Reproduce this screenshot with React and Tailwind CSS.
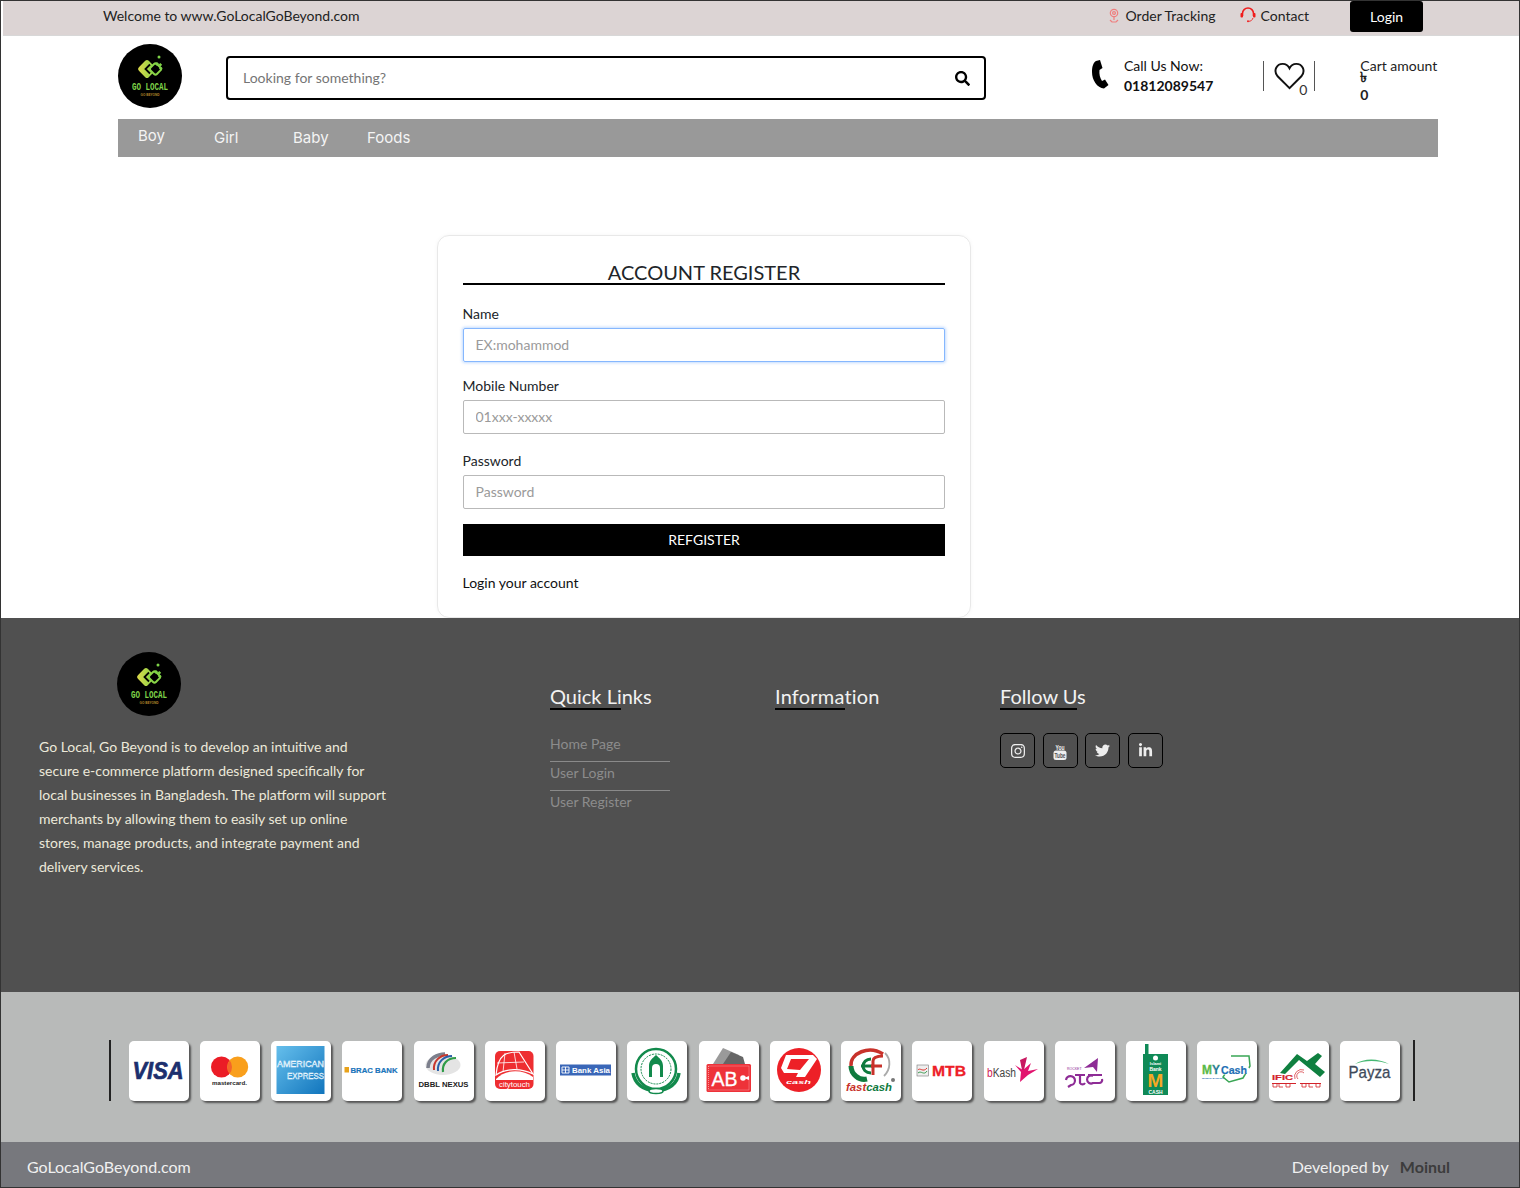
import React from "react";
import { FaInstagram, FaTwitter, FaLinkedinIn, FaSearch } from "react-icons/fa";

const LATO = { fontFamily: "Lato, sans-serif" };
const sans = "Liberation Sans, Arial, sans-serif";

function Logo() {
  return (
    <svg width="64" height="64" viewBox="0 0 64 64" className="block shrink-0">
      <defs>
        <linearGradient id="lg" x1="0" y1="1" x2="1" y2="0">
          <stop offset="0" stopColor="#e0d84a" />
          <stop offset="1" stopColor="#7ed348" />
        </linearGradient>
      </defs>
      <circle cx="32" cy="32" r="32" fill="#000" />
      <rect x="22" y="18" width="14" height="14" rx="2.500" transform="rotate(45 29 25)" fill="url(#lg)" />
      <rect x="33" y="20.500" width="9" height="9" rx="2" transform="rotate(45 37.500 25)" fill="#000" stroke="#8ad648" strokeWidth="2" />
      <path d="M32 20.500 L27.500 25 L32 29.500" fill="none" stroke="#000" strokeWidth="1.800" />
      <rect x="37.500" y="18.500" width="3" height="3" fill="#7ed348" transform="rotate(45 39 20)" />
      <rect x="41" y="19.500" width="2.600" height="2.600" fill="#7ed348" transform="rotate(45 42.300 20.800)" />
      <rect x="41.500" y="23" width="2.600" height="2.600" fill="#7ed348" transform="rotate(45 42.800 24.300)" />
      <circle cx="41" cy="13" r="1.500" fill="#7ed348" />
      <text x="32" y="46" textAnchor="middle" fontFamily="Liberation Mono, monospace" fontWeight="700" fontSize="10" textLength="36" lengthAdjust="spacingAndGlyphs" fill="#7ed348">GO LOCAL</text>
      <text x="32" y="51.500" textAnchor="middle" fontFamily={sans} fontWeight="700" fontSize="3" textLength="19" lengthAdjust="spacingAndGlyphs" fill="#b98a2a">GO BEYOND</text>
    </svg>
  );
}

const T = ({ children, ...p }) => (
  <text fontFamily={sans} fontWeight="700" {...p}>{children}</text>
);

const pay = [
  <T x="3.500" y="38" fontSize="24" fontStyle="italic" fill="#1c2f6e" stroke="#1c2f6e" strokeWidth="0.700" textLength="51" lengthAdjust="spacingAndGlyphs">VISA</T>,
  <g>
    <circle cx="21.500" cy="26" r="10.500" fill="#eb1c26" />
    <circle cx="37.700" cy="26" r="10.500" fill="#f99f1c" />
    <path d="M29.600 19.300 a10.500 10.500 0 0 1 0 13.400 a10.500 10.500 0 0 1 0 -13.400z" fill="#f4652a" />
    <T x="12" y="43.500" fontSize="5.500" fill="#222" textLength="35" lengthAdjust="spacingAndGlyphs">mastercard.</T>
  </g>,
  <g>
    <defs>
      <linearGradient id="ax" x1="0" y1="0" x2="1" y2="1">
        <stop offset="0" stopColor="#66bfec" />
        <stop offset="1" stopColor="#1175bd" />
      </linearGradient>
    </defs>
    <rect x="5.500" y="5" width="48" height="48" fill="url(#ax)" />
    <text x="6" y="26" fontFamily={sans} fontSize="9.500" fill="#8fcdf0" stroke="#fff" strokeWidth="0.400" textLength="47" lengthAdjust="spacingAndGlyphs">AMERICAN</text>
    <text x="16" y="38" fontFamily={sans} fontSize="9.500" fill="#8fcdf0" stroke="#fff" strokeWidth="0.400" textLength="37" lengthAdjust="spacingAndGlyphs">EXPRESS</text>
  </g>,
  <g>
    <rect x="2.500" y="26" width="4.500" height="5.500" fill="#e8a21a" />
    <T x="8.500" y="31.500" fontSize="8" fill="#1b75bb" stroke="#1b75bb" strokeWidth="0.200" textLength="47" lengthAdjust="spacingAndGlyphs">BRAC BANK</T>
  </g>,
  <g>
    <ellipse cx="29" cy="24" rx="17.500" ry="10" fill="#e4e4e4" />
    <path d="M14 27 C14 17 24 13 31 13" stroke="#7c7f8c" strokeWidth="3.500" fill="none" />
    <path d="M20 29 C19 20 26 14 34 14" stroke="#c8372d" strokeWidth="2" fill="none" />
    <path d="M24 30 C23 21 30 15 38 15" stroke="#2a5fa8" strokeWidth="2" fill="none" />
    <path d="M29 31 C28 23 33 17 42 17" stroke="#2f9c48" strokeWidth="2.200" fill="none" />
    <T x="4.500" y="45.500" fontSize="8" fill="#222" textLength="50" lengthAdjust="spacingAndGlyphs">DBBL NEXUS</T>
  </g>,
  <g>
    <rect x="10" y="10" width="38.500" height="38" rx="5" fill="#ee2e31" />
    <path d="M11 34 C13 12 22 11 34 11 L48 33 C38 28 22 26 11 34Z" fill="#ee2e31" stroke="#fff" strokeWidth="1.200" />
    <path d="M20 12 L18 31 M12 22 L39 21 M29 11 L32 28" stroke="#fff" strokeWidth="0.800" />
    <path d="M11 38 C20 28 38 28 48 36 L48 39 L11 39Z" fill="#fff" />
    <text x="14" y="46" fontFamily={sans} fontSize="8" fill="#fff" textLength="31" lengthAdjust="spacingAndGlyphs">citytouch</text>
  </g>,
  <g>
    <rect x="4" y="23.500" width="51" height="11" fill="#3a67b8" />
    <path d="M6 26 h7 v6 h-7z M9.500 26 v6 M6 29 h7" stroke="#fff" strokeWidth="0.900" fill="none" />
    <T x="16" y="32" fontSize="8" fill="#fff" textLength="38" lengthAdjust="spacingAndGlyphs">Bank Asia</T>
  </g>,
  <g fill="none" stroke="#128a4c">
    <circle cx="29" cy="28" r="20" strokeWidth="2.500" />
    <circle cx="29" cy="28" r="15" strokeWidth="1" strokeDasharray="2 1" />
    <path d="M22 36 V25 C22 19 26 17 29 14 C32 17 36 19 36 25 V36 Z" fill="#128a4c" stroke="none" />
    <path d="M25 36 V27 a4 4 0 0 1 8 0 V36Z" fill="#fff" stroke="none" />
    <path d="M6 32 C8 44 18 49 29 50 C40 49 50 44 52 32" strokeWidth="3.500" />
    <ellipse cx="29" cy="50" rx="7" ry="2.500" fill="#fff" strokeWidth="1.500" />
  </g>,
  <g>
    <path d="M14 23 L24 7 L40 14 L42 23Z" fill="#9a9a9a" />
    <path d="M24 23 L32 11 L44 16 L46 23Z" fill="#666" />
    <rect x="7.500" y="23" width="44.500" height="28" rx="1.500" fill="#ee3239" />
    <rect x="9.500" y="25" width="40.500" height="24" fill="none" stroke="#fff" strokeWidth="0.500" strokeDasharray="1 1" />
    <text x="12.500" y="45" fontFamily={sans} fontSize="20" fill="#fff" stroke="#fff" strokeWidth="0.300" textLength="26" lengthAdjust="spacingAndGlyphs">AB</text>
    <circle cx="44" cy="37" r="2.800" fill="#fff" />
    <path d="M45 37 l5 -2 v4z" fill="#fff" />
  </g>,
  <g>
    <circle cx="29" cy="29" r="22" fill="#ed2027" />
    <path d="M16 14 L43 14 L47 18 L35 36 L26 36 L28 32 L14 32 L11 27 Z" fill="#fff" />
    <path d="M21 18 L39 18 L30 29 L17 28 Z" fill="#ed2027" />
    <T x="16" y="43" fontSize="5.500" fontStyle="italic" fill="#fff" textLength="25" lengthAdjust="spacingAndGlyphs">cash</T>
  </g>,
  <g fill="none">
    <path d="M42 13 C28 4 9 12 10 25" stroke="#c8322b" strokeWidth="3.500" />
    <path d="M10 25 C10 33 18 40 26 38" stroke="#0f7a3e" strokeWidth="5" />
    <path d="M44 12 C50 18 50 28 43 35" stroke="#aaa" strokeWidth="1.800" />
    <path d="M30 18 C20 18 19 32 30 32 M20 25 H31" stroke="#0f7a3e" strokeWidth="3" />
    <path d="M32 34 V20 C32 16 36 15 42 15 M30 25 H41" stroke="#c8322b" strokeWidth="3" />
    <text x="5" y="50" fontFamily={sans} fontWeight="700" fontStyle="italic" fontSize="11" textLength="46" lengthAdjust="spacingAndGlyphs" fill="#c8322b">fast<tspan fill="#0f7a3e">cash</tspan></text>
    <circle cx="52" cy="39" r="2" fill="#777" />
  </g>,
  <g>
    <rect x="5" y="24" width="11.500" height="11" fill="#eee" stroke="#777" strokeWidth="0.600" />
    <path d="M6 29 C8 26 11 32 15 27" stroke="#e0322c" strokeWidth="1" fill="none" />
    <path d="M6 32 C9 29 12 35 15 30" stroke="#3c9a50" strokeWidth="1" fill="none" />
    <T x="20" y="35" fontSize="15" fill="#ed2027" stroke="#ed2027" strokeWidth="0.300" textLength="34" lengthAdjust="spacingAndGlyphs">MTB</T>
  </g>,
  <g>
    <text x="3" y="36" fontFamily={sans} fontSize="12.500" fill="#444" textLength="29" lengthAdjust="spacingAndGlyphs"><tspan fill="#d12053">b</tspan>Kash</text>
    <path d="M31 24 L39 29 L47 22 L44 30 L54 28 L44 34 L36 41 L37 31Z" fill="#e2136e" />
    <path d="M36 19 L43 16 L40 29 L38 29Z" fill="#c81860" />
  </g>,
  <g>
    <path d="M29 27 L43 17 L42 31 L38 26Z" fill="#8e2c96" />
    <text x="12" y="29" fontFamily={sans} fontSize="3.500" fill="#8e2c96">ROCKET</text>
    <g fill="none" stroke="#8e2c96" strokeWidth="2.200">
      <path d="M11 39 a4.500 4.500 0 1 1 5 5 l-3 2" />
      <path d="M20 34 h10 M25 34 v8 a3 3 0 0 0 5 0" />
      <path d="M33 34 h14 M38 35 a4 4 0 1 0 0 7 h6 a3 3 0 0 0 3 -4" />
    </g>
  </g>,
  <g>
    <rect x="19" y="3" width="3.500" height="11" fill="#0f8a57" />
    <rect x="17" y="13" width="25" height="41" fill="#0f8a57" />
    <circle cx="29.500" cy="17" r="2.500" fill="#fff" />
    <T x="29.500" y="24" fontSize="4" fill="#fff" textAnchor="middle">Islami</T>
    <T x="29.500" y="29.500" fontSize="5" fill="#fff" textAnchor="middle">Bank</T>
    <T x="29.500" y="46" fontSize="19" fill="#f7a823" textAnchor="middle">M</T>
    <T x="29.500" y="52.500" fontSize="5" fill="#fff" textAnchor="middle">CASH</T>
  </g>,
  <g>
    <path d="M34 15 L52 15 L53 25 L46 37 L32 41 L26 36 L30 30" fill="none" stroke="#3aa655" strokeWidth="1.500" />
    <T x="5" y="33" fontSize="13" fill="#5ab947" stroke="#5ab947" strokeWidth="0.300" textLength="18" lengthAdjust="spacingAndGlyphs">M<tspan fill="#1f6fb5">Y</tspan></T>
    <ellipse cx="37" cy="29" rx="16" ry="5.500" fill="#fff" />
    <T x="24" y="33" fontSize="10.500" fill="#1f6fb5" stroke="#1f6fb5" strokeWidth="0.200" textLength="26" lengthAdjust="spacingAndGlyphs">Cash</T>
    <T x="5" y="38" fontSize="2.500" fill="#1f6fb5">MOBILE BANKING</T>
  </g>,
  <g>
    <path d="M11 32 L28 13 L38 20 L49 12 L53 15 L46 23 L56 31 L51 36 L30 19 L16 33Z" fill="#0f8040" />
    <T x="3" y="39" fontSize="8" fill="#d3232a" stroke="#d3232a" strokeWidth="0.200" textLength="21" lengthAdjust="spacingAndGlyphs">IFIC</T>
    <path d="M26 38 a7 7 0 0 1 9 -9 M29 38 a4 4 0 0 1 6 -6" fill="none" stroke="#d3232a" strokeWidth="0.700" />
    <rect x="3" y="42" width="24" height="1" fill="#d3232a" />
    <path d="M4 43 v3 h4 v-3 M10 43 v3 h4 M17 43 v3 h4 v-3" stroke="#d3232a" strokeWidth="0.800" fill="none" />
    <rect x="31" y="42" width="21" height="1" fill="#d3232a" />
    <path d="M33 43 v3 h4 v-3 M40 43 v3 h4 M47 43 v3 h4 v-3" stroke="#d3232a" strokeWidth="0.800" fill="none" />
  </g>,
  <g>
    <path d="M15 23 C24 17 38 17 49 23 C38 19 25 19 15 23Z" fill="#46b872" />
    <text x="29.500" y="37" fontFamily={sans} fontSize="17" fill="#3e4a5a" stroke="#3e4a5a" strokeWidth="0.300" textAnchor="middle" textLength="42" lengthAdjust="spacingAndGlyphs">Payza</text>
  </g>,
];

function Field({ label, placeholder, focus }) {
  return (
    <div className="flex flex-col">
      <label className="mb-[4px] text-[14px] leading-[21px] text-[#212529]">{label}</label>
      <input
        readOnly
        placeholder={placeholder}
        className={`h-[33.500px] w-full rounded-[2px] border px-[12px] text-[14px] outline-none placeholder:text-[#9a9a9a] ${
          focus ? "border-[#86b7fe] shadow-[0_0_3px_1px_rgba(13,110,253,0.25)]" : "border-[#b9b9b9]"
        }`}
      />
    </div>
  );
}

const Social = ({ children }) => (
  <div className="flex h-[35px] w-[35px] items-center justify-center rounded-[5px] border border-black text-[#eee]">{children}</div>
);

function FooterHead({ children, line }) {
  return (
    <div className="relative h-[27px] text-[20px] leading-[25px] text-[#f2f2f2]">
      {children}
      <div className={`absolute left-0 top-[24px] h-[2px] bg-black ${line}`} />
    </div>
  );
}

export default function App() {
  return (
    <div className="flex h-[1188px] w-[1520px] flex-col overflow-hidden border border-[#333] bg-white" style={LATO}>
      {/* top bar */}
      <div className="ml-[2px] flex h-[35px] shrink-0 items-center border-b border-[#d8d8d8] bg-[#dcd4d4] text-[14px] text-[#222]">
        <span className="mb-[6px] ml-[100px]">Welcome to www.GoLocalGoBeyond.com</span>
        <div className="mb-[6px] ml-[748px] flex items-center">
          <svg width="12" height="15" viewBox="0 0 12 15" fill="none" stroke="#ef7f7f" strokeWidth="1.200">
            <circle cx="6" cy="5" r="3.700" />
            <circle cx="6" cy="5" r="1.400" />
            <path d="M6 9 L6 12 M2 12 L4 14 H8 L10 12" />
          </svg>
          <span className="ml-[6px]">Order Tracking</span>
        </div>
        <div className="mb-[6px] ml-[24px] flex items-center">
          <svg width="16" height="16" viewBox="0 0 16 16" fill="none" stroke="#f01c1c">
            <path d="M2.500 9 V6.500 a5.500 5.500 0 0 1 11 0 V9" strokeWidth="1.600" />
            <rect x="0.500" y="6" width="2.500" height="4.500" rx="1" fill="#f01c1c" strokeWidth="0" />
            <rect x="13" y="6" width="2.500" height="4.500" rx="1" fill="#f01c1c" strokeWidth="0" />
            <path d="M13 11 C12 13.500 11 14 9 14.300" strokeWidth="0.900" />
            <circle cx="8" cy="14.300" r="1" fill="#f01c1c" strokeWidth="0" />
          </svg>
          <span className="ml-[5px]">Contact</span>
        </div>
        <div className="mb-[3px] ml-[41px] flex h-[31px] w-[73px] items-center justify-center rounded-[3px] bg-black text-white">Login</div>
      </div>

      {/* header */}
      <div className="flex h-[83px] shrink-0 items-start">
        <div className="ml-[117px] mt-[8px]"><Logo /></div>
        <div className="ml-[44px] mt-[20px] flex h-[44px] w-[760px] items-center justify-between rounded-[4px] border-2 border-black pl-[15px] pr-[14px]">
          <span className="mb-[2px] text-[14px] text-[#757575]">Looking for something?</span>
          <FaSearch className="text-[15px] text-black" />
        </div>
        <svg width="19" height="30" viewBox="0 0 19 30" className="ml-[105px] mt-[24px] shrink-0" fill="#000">
          <path d="M5 1 L9 0 L11.500 8 L8.500 10 C8 14 9 18 11 21 L14 19.500 L17.500 25 L13 28.500 C6 28 1 20 1 12 C1 7 2 3 5 1 Z" />
        </svg>
        <div className="ml-[14px] mt-[20px] text-[14px] leading-[20px] text-[#111]">
          <div>Call Us Now:</div>
          <div className="font-bold">01812089547</div>
        </div>
        <div className="relative ml-[50px] mt-[25px] h-[30px] w-[52px] border-x border-[#555]">
          <svg width="31" height="28" viewBox="0 0 32 28" className="absolute left-[10px] top-[1px]" fill="none" stroke="#111" strokeWidth="2">
            <path d="M16 26.500 L3.500 14 C-1 8 3 1.500 9 1.500 C12 1.500 14.500 3 16 6 C17.500 3 20 1.500 23 1.500 C29 1.500 33 8 28.500 14 Z" />
          </svg>
          <span className="absolute left-[35px] top-[21px] text-[14px] leading-[16px] text-[#333]">0</span>
        </div>
        <div className="ml-[45px] mt-[20px] text-[14px] text-[#222]">
          <div className="leading-[20px]">Cart amount</div>
          <div className="-mt-[6px] h-[15px] text-[14px] font-bold leading-[14px]" style={{ fontFamily: "DejaVu Sans, sans-serif" }}>৳</div>
          <div className="text-[14px] font-bold leading-[20px]">0</div>
        </div>
      </div>

      {/* nav */}
      <div className="ml-[117px] flex h-[38px] w-[1320px] shrink-0 items-center bg-[#999] text-[15px] text-[#f4f4f4]" style={{ fontFamily: "Inter, sans-serif" }}>
        <span className="mb-[4px] ml-[20px] w-[76px]">Boy</span>
        <span className="w-[79px]">Girl</span>
        <span className="w-[74px]">Baby</span>
        <span>Foods</span>
      </div>

      {/* main */}
      <div className="flex h-[461px] shrink-0 items-end">
        <div className="ml-[436px] h-[383px] w-[534px] rounded-[12px] border border-[#e8e8e8] px-[25px] pt-[25px] shadow-[0_0_4px_rgba(0,0,0,0.04)]">
          <div className="h-[24px] border-b-2 border-black text-center text-[20px] leading-[23px] text-[#212529]">ACCOUNT REGISTER</div>
          <div className="-ml-[0.500px] mt-[18px]"><Field label="Name" placeholder="EX:mohammod" focus /></div>
          <div className="-ml-[0.500px] mt-[13.500px]"><Field label="Mobile Number" placeholder="01xxx-xxxxx" /></div>
          <div className="-ml-[0.500px] mt-[16.500px]"><Field label="Password" placeholder="Password" /></div>
          <div className="mt-[15.500px] flex h-[32px] items-center justify-center bg-black pb-[1px] text-[14px] text-white">REFGISTER</div>
          <div className="-ml-[0.500px] mt-[16px] text-[14px] leading-[21px] text-[#111]">Login your account</div>
        </div>
      </div>

      {/* footer */}
      <div className="flex h-[374px] shrink-0 bg-[#505050]">
        <div className="w-[549px] shrink-0 pl-[38px] pt-[34px]">
          <div className="ml-[78px]"><Logo /></div>
          <p className="mt-[19px] w-[352px] text-[14px] leading-[24px] text-[#ece9da]">
            Go Local, Go Beyond is to develop an intuitive and secure e-commerce platform designed specifically for local businesses in Bangladesh. The platform will support merchants by allowing them to easily set up online stores, manage products, and integrate payment and delivery services.
          </p>
        </div>
        <div className="w-[225px] shrink-0 pt-[66px]">
          <FooterHead line="w-[71px]">Quick Links</FooterHead>
          <div className="mt-[22px] w-[120px] text-[14px] text-[#8c8c8c]">
            <div className="h-[29px] border-b border-[#8a8a8a] leading-[21px]">Home Page</div>
            <div className="h-[29px] border-b border-[#8a8a8a] leading-[21px]">User Login</div>
            <div className="h-[29px] leading-[21px]">User Register</div>
          </div>
        </div>
        <div className="w-[225px] shrink-0 pt-[66px]">
          <FooterHead line="w-[70px]"><span className="tracking-[0.200px]">Information</span></FooterHead>
        </div>
        <div className="shrink-0 pt-[66px]">
          <FooterHead line="w-[77px]">Follow Us</FooterHead>
          <div className="mt-[22px] flex gap-[7.670px]">
            <Social><FaInstagram className="text-[16px]" /></Social>
            <Social>
              <svg width="16" height="22" viewBox="0 0 16 22">
                <text x="8" y="9.500" textAnchor="middle" fontFamily={sans} fontWeight="700" fontSize="7" textLength="9" lengthAdjust="spacingAndGlyphs" fill="#eee">You</text>
                <rect x="1.500" y="10.500" width="13" height="9.500" rx="2.500" fill="#eee" />
                <text x="8" y="17.500" textAnchor="middle" fontFamily={sans} fontWeight="700" fontSize="6.500" textLength="11" lengthAdjust="spacingAndGlyphs" fill="#505050">Tube</text>
              </svg>
            </Social>
            <Social><FaTwitter className="text-[15px]" /></Social>
            <Social><FaLinkedinIn className="text-[15px]" /></Social>
          </div>
        </div>
      </div>

      {/* payment strip */}
      <div className="flex h-[150px] shrink-0 items-center bg-[#b8bab9] pl-[108px] pt-[7px]">
        <div className="mr-[18px] h-[61px] w-[1.500px] bg-[#222]" />
        <div className="flex gap-[11.270px]">
          {pay.map((logo, i) => (
            <div key={i} className="h-[60px] w-[60px] shrink-0 rounded-[5px] bg-white shadow-[2px_2px_2px_#555]">
              <svg width="60" height="60" viewBox="0 0 60 60" className="block">{logo}</svg>
            </div>
          ))}
        </div>
        <div className="ml-[13px] h-[61px] w-[1.500px] bg-[#222]" />
      </div>

      {/* bottom */}
      <div className="flex flex-1 items-center bg-[#77787d] pl-[26px] pt-[4px] text-[16px] text-[#f0f0f0]">
        <span>GoLocalGoBeyond.com</span>
        <span className="ml-[1101px]">Developed by</span>
        <span className="ml-[11px] font-bold text-[#3c3c3c]">Moinul</span>
      </div>
    </div>
  );
}
